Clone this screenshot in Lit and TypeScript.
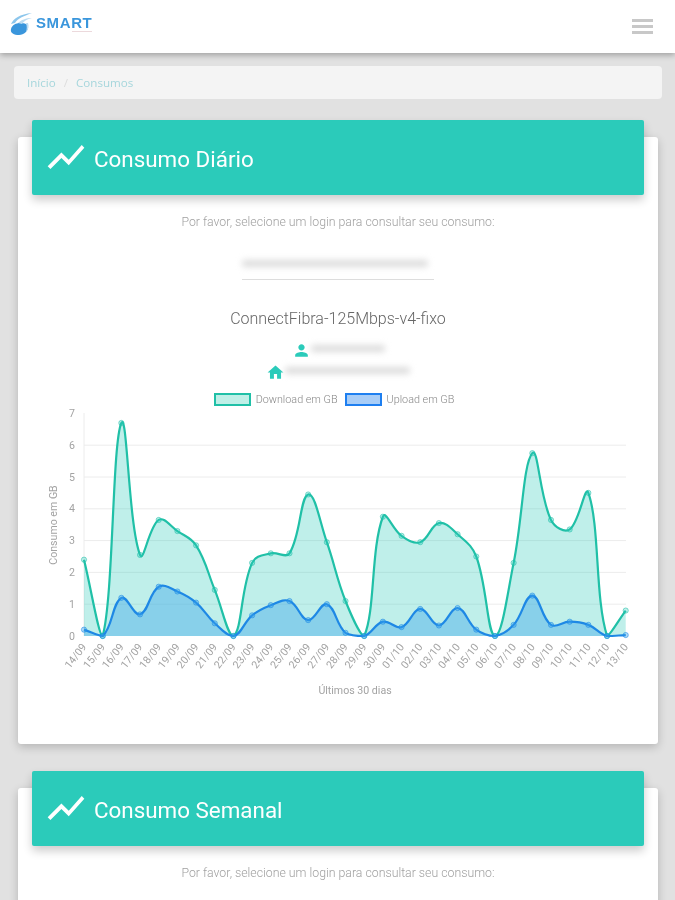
import { css, html, LitElement, svg } from "lit";
import { customElement, property } from "lit/decorators.js";

const TREND = "M3.5 18.49l6-6.01 4 4L22 6.92l-1.41-1.41-7.09 7.97-4-4L2 16.99z";
const PERSON =
  "M12 12c2.21 0 4-1.79 4-4s-1.79-4-4-4-4 1.79-4 4 1.79 4 4 4zm0 2c-2.67 0-8 1.34-8 4v2h16v-2c0-2.66-5.33-4-8-4z";
const HOME = "M10 20v-6h4v6h5v-8h3L12 3 2 12h3v8z";

const LABELS = [
  "14/09", "15/09", "16/09", "17/09", "18/09", "19/09", "20/09", "21/09", "22/09", "23/09",
  "24/09", "25/09", "26/09", "27/09", "28/09", "29/09", "30/09", "01/10", "02/10", "03/10",
  "04/10", "05/10", "06/10", "07/10", "08/10", "09/10", "10/10", "11/10", "12/10", "13/10",
];
const DOWNLOAD = [
  2.4, 0, 6.7, 2.55, 3.65, 3.3, 2.85, 1.45, 0, 2.3, 2.6, 2.6, 4.45, 2.95, 1.1, 0, 3.75, 3.15, 2.95,
  3.55, 3.2, 2.5, 0, 2.3, 5.75, 3.65, 3.35, 4.5, 0, 0.8,
];
const UPLOAD = [
  0.2, 0, 1.2, 0.68, 1.55, 1.4, 1.05, 0.4, 0, 0.65, 0.97, 1.1, 0.5, 1.0, 0.1, 0, 0.45, 0.28, 0.85,
  0.33, 0.88, 0.2, 0, 0.35, 1.27, 0.35, 0.45, 0.35, 0, 0.03,
];

// chart geometry, in svg coordinates
const LEFT = 66;
const STEP = 18.68;
const ZERO = 228;
const UNIT = 31.8;
const RIGHT = 608;

const px = (i: number) => LEFT + i * STEP;
const py = (v: number) => ZERO - v * UNIT;

// same spline as chart.js with tension 0.4, control points capped to the chart area
function splinePath(values: number[]) {
  const pts = values.map((v, i) => [px(i), py(v)]);
  const ctrl = pts.map((p, i) => {
    const prev = pts[i - 1] ?? p;
    const next = pts[i + 1] ?? p;
    const d01 = Math.hypot(p[0] - prev[0], p[1] - prev[1]);
    const d12 = Math.hypot(next[0] - p[0], next[1] - p[1]);
    const total = d01 + d12 || 1;
    const fa = (0.4 * d01) / total;
    const fb = (0.4 * d12) / total;
    const cap = (y: number) => Math.min(ZERO, y);
    return {
      before: [p[0] - fa * (next[0] - prev[0]), cap(p[1] - fa * (next[1] - prev[1]))],
      after: [p[0] + fb * (next[0] - prev[0]), cap(p[1] + fb * (next[1] - prev[1]))],
    };
  });
  let d = `M${pts[0][0]} ${pts[0][1]}`;
  for (let i = 1; i < pts.length; i++) {
    const a = ctrl[i - 1].after;
    const b = ctrl[i].before;
    d += `C${a[0]} ${a[1]} ${b[0]} ${b[1]} ${pts[i][0]} ${pts[i][1]}`;
  }
  return d;
}

@customElement("consumo-chart")
export class ConsumoChart extends LitElement {
  private series(values: number[], fill: string, color: string) {
    const line = splinePath(values);
    return svg`
      <path d="${line}L${px(29)} ${ZERO}L${LEFT} ${ZERO}Z" fill=${fill}></path>
      <path d=${line} fill="none" stroke=${color} stroke-width="2.2"></path>
      ${values.map(
        (v, i) => svg`<circle cx=${px(i)} cy=${py(v)} r="2.6" fill=${fill} stroke=${color} stroke-opacity="0.55"></circle>`
      )}
    `;
  }

  render() {
    return html`
      <svg width="640" height="300" viewBox="0 0 640 300">
        <line x1=${LEFT} x2=${LEFT} y1="5" y2=${ZERO} stroke="#ececec"></line>
        ${[0, 1, 2, 3, 4, 5, 6, 7].map(
          (v) => svg`
            ${v > 0 && v < 7
              ? svg`<line x1=${LEFT} x2=${RIGHT} y1=${py(v)} y2=${py(v)} stroke="#ececec"></line>`
              : ""}
            <text class="tick" x="57" y=${py(v) + 3.5} text-anchor="end">${v}</text>
          `
        )}
        ${this.series(DOWNLOAD, "rgba(43,203,186,0.3)", "#20c0a7")}
        ${this.series(UPLOAD, "rgba(54,162,235,0.4)", "#1e88e5")}
        ${LABELS.map(
          (label, i) => svg`
            <text class="tick date" text-anchor="end"
              transform="translate(${px(i) + 3} ${ZERO + 11}) rotate(-52)">${label}</text>
          `
        )}
        <text class="tick" text-anchor="middle" transform="translate(39 117) rotate(-90)">Consumo em GB</text>
        <text class="tick" x="337" y="286" text-anchor="middle">Últimos 30 dias</text>
      </svg>
    `;
  }

  static styles = css`
    :host {
      display: block;
    }

    svg {
      display: block;
    }

    .tick {
      font: 10.6px "Roboto", sans-serif;
      fill: #a3a3a3;
    }

    .date {
      font-size: 10.6px;
    }
  `;
}

@customElement("consumo-card")
export class ConsumoCard extends LitElement {
  @property() heading = "";
  @property({ type: Boolean }) detalhes = false;

  render() {
    return html`
      <div class="band">
        <svg class="trend" viewBox="0 0 24 24"><path d=${TREND}></path></svg>
        <h2>${this.heading}</h2>
      </div>
      <p class="hint">Por favor, selecione um login para consultar seu consumo:</p>
      ${this.detalhes
        ? html`
            <div class="select"><div class="smear long"></div></div>
            <h3>ConnectFibra-125Mbps-v4-fixo</h3>
            <div class="info">
              <svg class="person" viewBox="0 0 24 24"><path d=${PERSON}></path></svg>
              <div class="smear user"></div>
            </div>
            <div class="info address">
              <svg class="home" viewBox="0 0 24 24"><path d=${HOME}></path></svg>
              <div class="smear addr"></div>
            </div>
            <div class="legend">
              <span class="box down"></span><span>Download em GB</span>
              <span class="box up"></span><span>Upload em GB</span>
            </div>
            <consumo-chart></consumo-chart>
          `
        : ""}
    `;
  }

  static styles = css`
    :host {
      display: block;
      background: #fff;
      margin: 0 17px 0 18px;
      border-radius: 3px;
      box-shadow: 0 3px 10px rgba(0, 0, 0, 0.2);
      font-family: "Roboto", sans-serif;
      padding-bottom: 36px;
    }

    .band {
      position: relative;
      top: -17px;
      margin: 0 14px -17px;
      height: 74.5px;
      padding-left: 12px;
      display: flex;
      align-items: center;
      gap: 6px;
      background: #2bcbba;
      border-radius: 2px;
      box-shadow: 0 5px 10px rgba(0, 0, 0, 0.2);
      color: #fff;
    }

    .trend {
      width: 44px;
      height: 44px;
      fill: #fff;
      flex: none;
    }

    h2 {
      margin: 4px 0 0;
      font-size: 22.4px;
      font-weight: 400;
    }

    .hint {
      margin: 20px 0 0;
      text-align: center;
      font-size: 12.3px;
      font-weight: 300;
      line-height: 14px;
      color: #a0a0a0;
    }

    .select {
      width: 192px;
      height: 23px;
      margin: 9.5px auto 0;
      padding-top: 18px;
      border-bottom: 1px solid #ddd;
    }

    .smear {
      height: 7px;
      background: #dcdcdc;
      border-radius: 3px;
      filter: blur(3px);
    }

    .long {
      width: 186px;
      margin-top: 4px;
    }

    h3 {
      margin: 29px 0 0;
      text-align: center;
      font-size: 16px;
      font-weight: 300;
      line-height: 20px;
      color: #666;
    }

    .info {
      display: flex;
      justify-content: center;
      align-items: center;
      height: 20px;
      margin-top: 11px;
    }

    .address {
      margin-top: 2px;
    }

    .person,
    .home {
      fill: #2bcbba;
      flex: none;
    }

    .person {
      width: 19px;
      height: 19px;
    }

    .home {
      width: 19px;
      height: 19px;
    }

    .user {
      width: 74px;
      margin-top: -3px;
    }

    .addr {
      width: 125px;
      margin-top: -4px;
    }

    .legend {
      display: flex;
      justify-content: center;
      align-items: center;
      gap: 5px;
      margin-top: 10px;
      padding-right: 10px;
      height: 14px;
      font-size: 10.8px;
      font-weight: 300;
      color: #888;
    }

    .box {
      width: 33px;
      height: 9px;
      border: 2px solid;
      margin-left: 2px;
    }

    .down {
      border-color: #20c0a7;
      background: #bfefe7;
    }

    .up {
      border-color: #1e7ff0;
      background: #a8cdf7;
    }

    consumo-chart {
      margin-top: 2px;
    }
  `;
}

@customElement("app-root")
export class AppRoot extends LitElement {
  render() {
    return html`
      <header>
        <div class="logo">
          <svg width="24" height="24" viewBox="0 0 24 24">
            <path d="M2 17c1-4 5-6 9-6 5 0 8 1 8 4 0 4-4 8-9 8-5 0-9-2-8-6z" fill="#3a96dc"></path>
            <path d="M2 12C4 7 11 2 23 1 15 4 9 6 6 11z" fill="#8cc6ec"></path>
            <path d="M9 11c3-3 8-5 14-5-5 1-8 3-10 6z" fill="#bcdcf2"></path>
            <path d="M19 11c1 3 1 6-2 9 1-3 1-6 0-9z" fill="#bcdcf2"></path>
          </svg>
          <div>
            <div class="brand">SMART</div>
            <div class="sub"></div>
          </div>
        </div>
        <div class="burger"><span></span><span></span><span></span></div>
      </header>
      <nav>
        <a>Início</a>
        <span class="sep">/</span>
        <a>Consumos</a>
      </nav>
      <main>
        <consumo-card heading="Consumo Diário" detalhes></consumo-card>
        <consumo-card heading="Consumo Semanal"></consumo-card>
      </main>
    `;
  }

  static styles = css`
    :host {
      display: block;
      height: 900px;
      overflow: hidden;
      background: #e1e1e1;
      filter: blur(0.6px);
    }

    header {
      height: 53px;
      background: #fff;
      box-shadow: 0 2px 6px rgba(0, 0, 0, 0.3);
      display: flex;
      justify-content: space-between;
      align-items: center;
      padding: 0 22px 0 9px;
    }

    .logo {
      display: flex;
      align-items: center;
      gap: 3px;
      margin-top: -5px;
    }

    .brand {
      font: bold 15px/14px "Liberation Sans", sans-serif;
      letter-spacing: 0.6px;
      color: #3a96dc;
    }

    .sub {
      width: 20px;
      height: 1px;
      margin: 1px 0 0 36px;
      background: #ecd9dc;
    }

    .burger {
      display: flex;
      flex-direction: column;
      gap: 2.5px;
      width: 21px;
    }

    .burger span {
      height: 3.5px;
      background: #c8c8c8;
    }

    nav {
      height: 33px;
      margin: 13px 13px 38px 14px;
      padding-left: 13px;
      display: flex;
      align-items: center;
      gap: 8px;
      background: #f4f4f4;
      border-radius: 4px;
      font: 11.6px "Open Sans", sans-serif;
      color: #a6d6dc;
    }

    .sep {
      color: #ddd;
    }

    consumo-card + consumo-card {
      margin-top: 44px;
      height: 300px;
    }
  `;
}
